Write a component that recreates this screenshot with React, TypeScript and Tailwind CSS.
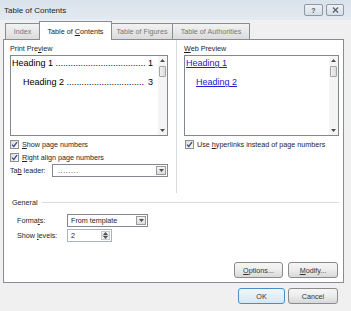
import React from 'react';

function U({ children }: { children: React.ReactNode }) {
  return <span className="underline underline-offset-1">{children}</span>;
}

function Check() {
  return (
    <div className="w-[9px] h-[9px] border border-[#8e8f8f] bg-linear-to-br from-[#dcdcdc] to-[#fbfbfb] flex items-center justify-center shrink-0">
      <svg width="7" height="7" viewBox="0 0 7 7">
        <path d="M1 3.6 L2.8 5.4 L6 1.2" fill="none" stroke="#3b4c7e" strokeWidth="1.3" />
      </svg>
    </div>
  );
}

function Arrow({ up }: { up?: boolean }) {
  return (
    <svg width="5" height="3" viewBox="0 0 5 3">
      <path d={up ? 'M0 3 L2.5 0 L5 3 Z' : 'M0 0 L5 0 L2.5 3 Z'} fill="#4d4d4d" />
    </svg>
  );
}

function DropBtn() {
  return (
    <div className="w-[10px] my-px mr-px border border-[#9a9a9a] bg-linear-to-b from-[#f4f4f4] to-[#dcdcdc] flex items-center justify-center">
      <Arrow />
    </div>
  );
}

function Scroll() {
  return (
    <div className="w-[9px] bg-[#f4f4f4] flex flex-col shrink-0">
      <div className="h-[9px] flex items-center justify-center"><Arrow up /></div>
      <div className="h-[11px] mx-px mt-px border border-[#a5a5a5] rounded-[1px] bg-linear-to-r from-[#f1f1f1] to-[#dcdcdc]" />
      <div className="flex-1" />
      <div className="h-[9px] flex items-center justify-center"><Arrow /></div>
    </div>
  );
}

function Btn({ children, w, primary }: { children: React.ReactNode; w: string; primary?: boolean }) {
  return (
    <div
      className={`${w} h-[16px] rounded-[3px] border flex items-center justify-center text-[#333] ${
        primary
          ? 'border-[#4a8cc4] bg-linear-to-b from-[#f0f7fc] to-[#d6e7f3]'
          : 'border-[#8a8a8a] bg-linear-to-b from-[#f6f6f6] via-[#ececec] to-[#d8d8d8]'
      }`}
    >
      {children}
    </div>
  );
}

function Leader({ label, num, dots, indent }: { label: string; num: string; dots: number; indent: string }) {
  return (
    <div className={`flex justify-between ${indent} pr-[5px] text-[9px] leading-[11px] text-black whitespace-nowrap`}>
      <span>
        {label} {'.'.repeat(dots)}
      </span>
      <span>{num}</span>
    </div>
  );
}

export default function App() {
  return (
    <div className="w-[351px] h-[311px] bg-[#f0f0f0] flex flex-col overflow-hidden text-[7.2px] leading-[9px] text-[#1e1e1e] font-['Liberation_Sans',Arial,sans-serif]">
      {/* title bar */}
      <div className="h-[20px] shrink-0 flex items-center justify-between pl-[4px] pr-[7px] bg-linear-to-b from-[#d9e2ec] to-[#e4eaf1]">
        <span className="text-[8px] text-[#1e1e1e]">Table of Contents</span>
        <div className="flex gap-[3px]">
          <div className="w-[19px] h-[12px] rounded-[2px] border border-[#8d99a6] bg-linear-to-b from-[#eef2f6] to-[#d6dee7] flex items-center justify-center text-[7px] text-[#555] font-bold">
            ?
          </div>
          <div className="w-[18px] h-[12px] rounded-[2px] border border-[#8d99a6] bg-linear-to-b from-[#eef2f6] to-[#d6dee7] flex items-center justify-center">
            <svg width="7" height="6" viewBox="0 0 7 6">
              <path d="M1 0.5 L6 5.5 M6 0.5 L1 5.5" stroke="#5d6670" strokeWidth="1.4" />
            </svg>
          </div>
        </div>
      </div>

      <div className="flex-1 flex flex-col pl-[3px] pr-[7px] pt-px">
        {/* tabs */}
        <div className="h-[18px] flex items-end pl-[2px]">
          <div className="w-[35px] h-[16px] border border-b-0 border-[#898c95] bg-linear-to-b from-[#f2f2f2] to-[#dcdcdc] flex items-center justify-center text-[#777]">
            Index
          </div>
          <div className="w-[73px] h-[19px] -mb-px -ml-px relative z-10 border border-b-0 border-[#898c95] bg-white flex items-center justify-center text-[#1e1e1e]">
            Table of&nbsp;<U>C</U>ontents
          </div>
          <div className="w-[62px] h-[16px] -ml-px border border-b-0 border-[#898c95] bg-linear-to-b from-[#f2f2f2] to-[#dcdcdc] flex items-center justify-center text-[#777]">
            Table of Figures
          </div>
          <div className="w-[78px] h-[16px] -ml-px border border-b-0 border-[#898c95] bg-linear-to-b from-[#f2f2f2] to-[#dcdcdc] flex items-center justify-center text-[#777]">
            Table of Authorities
          </div>
        </div>

        {/* panel */}
        <div className="h-[244px] border border-[#898c95] bg-white flex flex-col">
          <div className="h-[153px] flex">
            {/* print preview */}
            <div className="w-[172px] pl-[6px] pr-[8px] pt-[4px] flex flex-col">
              <div className="h-[9px]">
                Print Pre<U>v</U>iew
              </div>
              <div className="mt-[2px] h-[81px] border border-[#828790] flex">
                <div className="flex-1 pt-[2px]">
                  <Leader label="Heading 1" num="1" dots={36} indent="pl-px" />
                  <div className="mt-[8px]">
                    <Leader label="Heading 2" num="3" dots={31} indent="pl-[12px]" />
                  </div>
                </div>
                <Scroll />
              </div>
              <div className="mt-[3px] h-[10px] flex items-center gap-[3px]">
                <Check />
                <span><U>S</U>how page numbers</span>
              </div>
              <div className="mt-[3px] h-[10px] flex items-center gap-[3px]">
                <Check />
                <span><U>R</U>ight align page numbers</span>
              </div>
              <div className="mt-[2px] h-[13px] flex items-center">
                <span className="w-[42px]">Ta<U>b</U> leader:</span>
                <div className="flex-1 h-[13px] border border-[#828790] flex">
                  <span className="flex-1 pl-[5px] flex items-center tracking-[0.6px]">........</span>
                  <DropBtn />
                </div>
              </div>
            </div>

            <div className="w-px bg-[#d6dbe0]" />

            {/* web preview */}
            <div className="flex-1 pl-[7px] pr-[4px] pt-[4px] flex flex-col">
              <div className="h-[9px]">
                <U>W</U>eb Preview
              </div>
              <div className="mt-[2px] h-[81px] border border-[#828790] flex">
                <div className="flex-1 pt-[2px] pl-px text-[9px] leading-[11px] text-[#2020d8]">
                  <div><span className="underline">Heading 1</span></div>
                  <div className="mt-[8px] pl-[10px]"><span className="underline">Heading 2</span></div>
                </div>
                <Scroll />
              </div>
              <div className="mt-[3px] h-[10px] flex items-center gap-[3px] pl-px">
                <Check />
                <span>Use <U>h</U>yperlinks instead of page numbers</span>
              </div>
            </div>
          </div>

          {/* general */}
          <div className="flex-1 flex flex-col pl-[8px] pr-[4px] pt-[5px]">
            <div className="h-[9px] flex items-center">
              <span>General</span>
              <div className="flex-1 h-px bg-[#d6dbe0] ml-[4px]" />
            </div>
            <div className="mt-[7px] pl-[5px] flex items-center h-[13px]">
              <span className="w-[50px]">Forma<U>t</U>s:</span>
              <div className="w-[81px] h-[13px] border border-[#828790] flex">
                <span className="flex-1 pl-[3px] flex items-center">From template</span>
                <DropBtn />
              </div>
            </div>
            <div className="mt-[2px] pl-[5px] flex items-center h-[13px]">
              <span className="w-[50px]">Show <U>l</U>evels:</span>
              <div className="w-[45px] h-[13px] border border-[#a9b3bd] flex">
                <span className="flex-1 pl-[3px] flex items-center">2</span>
                <div className="w-[9px] my-px mr-px flex flex-col border border-[#c6ccd2] bg-[#eef0f2]">
                  <div className="flex-1 flex items-center justify-center border-b border-[#c6ccd2]"><Arrow up /></div>
                  <div className="flex-1 flex items-center justify-center"><Arrow /></div>
                </div>
              </div>
            </div>

            <div className="mt-auto pb-[4px] pr-px flex justify-end gap-[5px]">
              <Btn w="w-[49px]"><U>O</U>ptions...</Btn>
              <Btn w="w-[50px]"><U>M</U>odify...</Btn>
            </div>
          </div>
        </div>

        {/* dialog buttons */}
        <div className="mt-[5px] pr-[6px] flex justify-end gap-[3px]">
          <Btn w="w-[47px]" primary>OK</Btn>
          <Btn w="w-[50px]">Cancel</Btn>
        </div>
      </div>
    </div>
  );
}
